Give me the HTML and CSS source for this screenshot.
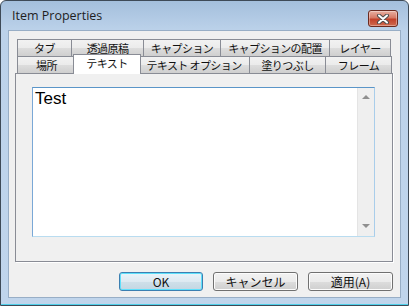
FILE: index.html
```html
<!DOCTYPE html>
<html>

<head>
    <meta charset="UTF-8">
    <title>Item Properties</title>
    <link rel="stylesheet" href="styles.css">
</head>

<body>
    <div class="window">
        <div class="titlebar">
            <span class="title">Item Properties</span>
            <div class="close">
                <svg width="14" height="10" viewBox="0 0 14 10">
                    <path d="M3 1.5 L11 8.5 M11 1.5 L3 8.5" stroke="#4d4d4d" stroke-width="4" stroke-linecap="round" />
                    <path d="M3 1.5 L11 8.5 M11 1.5 L3 8.5" stroke="#ffffff" stroke-width="2" stroke-linecap="round" />
                </svg>
            </div>
        </div>

        <div class="client">
            <div class="tabs">
                <div class="tab-row">
                    <div class="tab t-tab">タブ</div>
                    <div class="tab t-trans">透過原稿</div>
                    <div class="tab t-cap">キャプション</div>
                    <div class="tab t-cappos">キャプションの配置</div>
                    <div class="tab t-layer">レイヤー</div>
                </div>
                <div class="tab-row">
                    <div class="tab t-place">場所</div>
                    <div class="tab t-text selected">テキスト</div>
                    <div class="tab t-textopt">テキスト オプション</div>
                    <div class="tab t-fill">塗りつぶし</div>
                    <div class="tab t-frame">フレーム</div>
                </div>
            </div>

            <div class="panel">
                <div class="editor">
                    <div class="editor-text">Test</div>
                    <div class="scrollbar">
                        <span class="arrow up"></span>
                        <span class="arrow down"></span>
                    </div>
                </div>
            </div>

            <div class="buttons">
                <div class="button default">OK</div>
                <div class="button">キャンセル</div>
                <div class="button">適用(A)</div>
            </div>
        </div>
    </div>
</body>

</html>
```

FILE: styles.css
```css
html,
body {
    margin: 0;
    background: #ffffff;
}

/* janela inteira */
.window {
    width: 409px;
    height: 306px;
    box-sizing: border-box;
    display: flex;
    flex-direction: column;
    padding: 0 7px 7px 7px;
    border: 1px solid #3e4a57;
    border-radius: 6px 6px 0 0;
    background: linear-gradient(#a4bfdc, #bcd2ea 30px, #c0d5ec);
    box-shadow: inset 0 -1px 0 #4fd0ea;
}

.titlebar {
    height: 29px;
    flex: none;
    display: flex;
    justify-content: space-between;
    align-items: flex-start;
    padding: 0 3px 0 4px;
}

.title {
    margin-top: 6px;
    font-family: "Open Sans", sans-serif;
    font-size: 12.5px;
    color: #1e1e1e;
}

.close {
    width: 30px;
    height: 17px;
    margin-top: 9px;
    box-sizing: border-box;
    display: flex;
    align-items: center;
    justify-content: center;
    border: 1px solid #6b2a1f;
    border-radius: 3px;
    background: linear-gradient(#e8b0a2, #d77a66 45%, #c2412a 55%, #cf6a4f);
    box-shadow: inset 0 0 0 1px rgba(255, 255, 255, 0.35);
}

/* area cinza */
.client {
    flex: 1;
    display: flex;
    flex-direction: column;
    padding-top: 8px;
    border: 1px solid #98aec6;
    background: #f0f0f0;
    font-family: "Noto Sans CJK JP", sans-serif;
    font-size: 11px;
    color: #111;
}

.tabs {
    margin-left: 8px;
}

.tab-row {
    display: flex;
    align-items: flex-end;
    height: 17px;
}

.tab {
    height: 17px;
    box-sizing: border-box;
    display: flex;
    align-items: center;
    justify-content: center;
    margin-left: -1px;
    border: 1px solid #898c95;
    border-bottom: none;
    background: linear-gradient(#f2f2f2, #ebebeb 50%, #dddddd 50%, #cfcfcf);
    line-height: 1;
    letter-spacing: -0.6px;
    white-space: nowrap;
}

.tab:first-child {
    margin-left: 0;
}

.t-tab { width: 55px; }
.t-trans { width: 73px; }
.t-cap { width: 78px; }
.t-cappos { width: 110px; }
.t-layer { width: 62px; }

.t-place { width: 59px; }
.t-textopt { width: 112px; }
.t-fill { width: 77px; }
.t-frame { width: 67px; }

/* aba ativa fica maior e por cima do painel */
.tab.selected {
    position: relative;
    z-index: 1;
    width: 68px;
    height: 20px;
    margin: 0 -2px -1px -3px;
    padding: 0 0 3px 0;
    background: #ffffff;
}

.panel {
    height: 189px;
    box-sizing: border-box;
    margin: 0 7px 0 6px;
    padding: 13px 0 0 16px;
    border: 1px solid #898c95;
    background: #f0f0f0;
    box-shadow: 1px 1px 0 #ffffff;
}

.editor {
    width: 343px;
    height: 150px;
    box-sizing: border-box;
    display: flex;
    border: 1px solid;
    border-color: #5a95c8 #a9cdea #b9dcf0 #7aa8d6;
    background: #ffffff;
}

.editor-text {
    flex: 1;
    padding: 1px 0 0 2px;
    font-family: "Liberation Sans", sans-serif;
    font-size: 17px;
    color: #000;
}

.scrollbar {
    width: 17px;
    display: flex;
    flex-direction: column;
    justify-content: space-between;
    align-items: center;
    padding: 7px 0 8px 0;
    box-sizing: border-box;
    border-left: 1px solid #e4e4e4;
    background: #efefef;
}

.arrow {
    width: 0;
    height: 0;
    border-left: 4px solid transparent;
    border-right: 4px solid transparent;
}

.arrow.up {
    border-bottom: 4px solid #8f8f8f;
}

.arrow.down {
    border-top: 4px solid #8f8f8f;
}

.buttons {
    display: flex;
    justify-content: flex-end;
    gap: 10px;
    margin-top: 10px;
    padding-right: 7px;
}

.button {
    width: 85px;
    height: 19px;
    box-sizing: border-box;
    display: flex;
    align-items: center;
    justify-content: center;
    border: 1px solid #707070;
    border-radius: 3px;
    background: linear-gradient(#f2f2f2, #ebebeb 50%, #dddddd 50%, #cfcfcf);
    box-shadow: inset 0 0 0 1px #fcfcfc;
    line-height: 1;
    font-size: 12px;
}

.button.default {
    width: 84px;
    border-color: #3c7fb1;
    background: linear-gradient(#eaf4fa, #dde9f1 50%, #cfe0ea 50%, #c3d6e2);
    box-shadow: inset 0 0 0 1px #5ee0fb;
}
```
